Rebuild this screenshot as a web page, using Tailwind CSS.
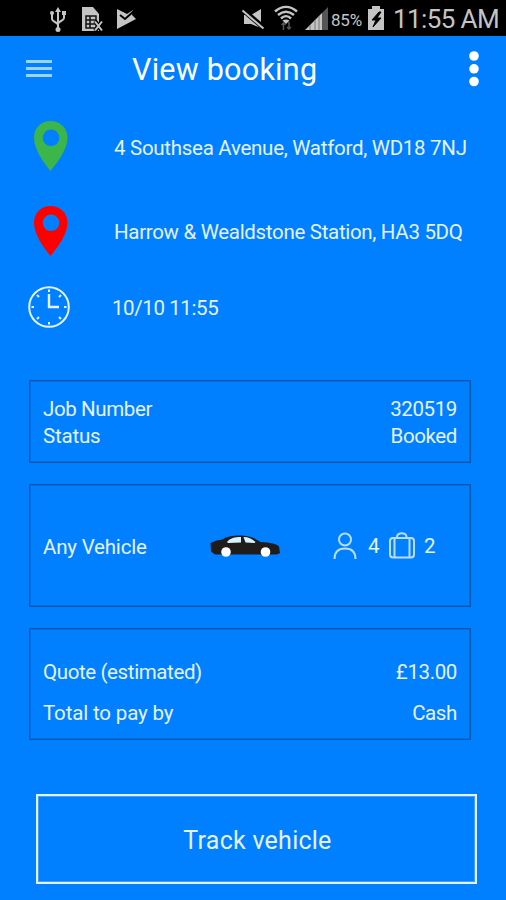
<!DOCTYPE html>
<html lang="en">
<head>
<meta charset="utf-8">
<title>View booking</title>
<script src="https://cdn.jsdelivr.net/npm/@tailwindcss/browser@4"></script>
</head>
<body class="w-[506px] h-[900px] overflow-hidden bg-[#0080ff] font-[Roboto,sans-serif] text-[#e4f2ff] flex flex-col">
  <div class="h-9 shrink-0 bg-black flex items-center text-[#c4c4c4]">
    <svg class="w-[240px] h-9 shrink-0" viewBox="0 0 240 36" fill="none">
      <g stroke="#c4c4c4" stroke-width="2">
        <path d="M58 11v18M52 13v6c0 3 6 3 6 6M64 13v5c0 3-6 3-6 6"/>
      </g>
      <g fill="#c4c4c4"><path d="M58 7l3 5h-6z"/><circle cx="58" cy="29.500" r="2.500"/><circle cx="52" cy="13" r="2"/><path d="M62 11h4v4h-4z"/></g>
      <path d="M82 7h11l6 7v17H82z" fill="#c4c4c4"/>
      <path d="M86 16h10v12H86zM86 20h10M86 24h10M90 16v12" stroke="#111" stroke-width="1.500"/>
      <path d="M95 21l8 10M103 21l-8 10" stroke="#000" stroke-width="4"/>
      <path d="M95 21.500l7 9M102 21.500l-7 9" stroke="#c4c4c4" stroke-width="2"/>
      <path d="M117 9l6 3 4 2 6-4-1 5 4 4-19 10z" fill="#c4c4c4"/>
      <path d="M120 15l5 4 9-8" stroke="#000" stroke-width="2"/>
    </svg>
    <svg class="w-[90px] h-9 shrink-0" viewBox="240 0 90 36" fill="none">
      <path d="M244 15h7l10-6v19l-10-4h-7z" fill="#c4c4c4"/>
      <path d="M242 9l22 19" stroke="#000" stroke-width="5"/><path d="M242.500 10.500l21 18" stroke="#c4c4c4" stroke-width="2"/>
      <path d="M275 11.500c7-6 15-6 22 0M278 15c5-4 11-4 16 0M281 18.500c3-3 7-3 10 0" stroke="#c4c4c4" stroke-width="2.500"/>
      <path d="M282.500 20.500q3.500-2 7 0L286 24z" fill="#c4c4c4"/>
      <path d="M283.500 30v-7M281.500 25l2-2 2 2M289 22v7M287 27l2 2 2-2" stroke="#555" stroke-width="1.500"/>
      <path d="M305 30L322 13v17z" fill="#c4c4c4"/>
      <path d="M322 13l6-6v23h-6z" fill="#555"/>
      <path d="M310 25v5M315 20v10M319 16v14" stroke="#777" stroke-width="1"/>
    </svg>
    <span class="w-[37px] pl-[1px] pt-[4px] text-[17px] leading-5 tracking-[-0.200px]">85%</span>
    <svg class="w-[18px] h-9 shrink-0" viewBox="366 0 18 36"><path d="M367 9h4V6h8v3h4v21h-16z" fill="#c4c4c4"/><path d="M378 12l-7 8h4l-3 7 8-9h-4l4-6z" fill="#000" stroke="#000"/></svg>
    <span class="pl-[8px] pt-[2px] text-[26px] leading-8 tracking-[-0.600px] whitespace-nowrap">11:55 AM</span>
  </div>

  <header class="h-[65px] shrink-0 flex items-center">
    <svg class="ml-[26px] w-[26px] h-5" viewBox="0 0 26 20" stroke="#9fd0ff" stroke-width="3"><path d="M0 2.500h26M0 9.500h26M0 16.500h26"/></svg>
    <h1 class="ml-[80px] w-[330px] text-[30.500px] leading-9 pt-[2px] tracking-[0.250px] text-white whitespace-nowrap">View booking</h1>
    <svg class="w-[24px] h-10" viewBox="462 48 24 40" fill="#fff"><circle cx="474" cy="55" r="4.800"/><circle cx="474" cy="67.800" r="4.800"/><circle cx="474" cy="80.500" r="4.800"/></svg>
  </header>

  <section class="h-[279px] shrink-0 text-[20.500px] tracking-[-0.280px]">
    <div class="h-[90px] flex items-center">
      <svg class="ml-[33px] w-9 h-[52px]" viewBox="0 0 36 52"><path fill="#3cb54a" fill-rule="evenodd" d="M17.500 1C8 1 1 8 1 17.500c0 12 9 24 16.500 33.500C25 41.500 34.500 29.500 34.500 17.500 34.500 8 27 1 17.500 1zM18 9.500a8.300 8.300 0 1 1 0 16.600 8.300 8.300 0 0 1 0-16.600z"/></svg>
      <span class="ml-[45px] pt-[4px] whitespace-nowrap">4 Southsea Avenue, Watford, WD18 7NJ</span>
    </div>
    <div class="h-[79px] flex items-center">
      <svg class="ml-[33px] w-9 h-[52px]" viewBox="0 0 36 52"><path fill="#ff0000" fill-rule="evenodd" d="M17.500 1C8 1 1 8 1 17.500c0 12 9 24 16.500 33.500C25 41.500 34.500 29.500 34.500 17.500 34.500 8 27 1 17.500 1zM18 9.500a8.300 8.300 0 1 1 0 16.600 8.300 8.300 0 0 1 0-16.600z"/></svg>
      <span class="ml-[45px] pt-[3px] tracking-[-0.310px] whitespace-nowrap">Harrow &amp; Wealdstone Station, HA3 5DQ</span>
    </div>
    <div class="h-[74px] flex items-center">
      <svg class="ml-[28px] w-[42px] h-[42px]" viewBox="0 0 42 42" fill="none" stroke="#e4f2ff"><circle cx="21" cy="21" r="19.800" stroke-width="2"/><path d="M21 8v13h10" stroke-width="2.400"/><path d="M21 3.500v2.500M21 36v2.500M3.500 21H6M36 21h2.500M9 9l2 2M31 31l2 2M9 33l2-2M31 11l2-2" stroke-width="2"/></svg>
      <span class="ml-[42px] pt-[2px] tracking-[-0.400px] whitespace-nowrap">10/10 11:55</span>
    </div>
  </section>

  <main class="pl-[29px] pr-[35px] flex flex-col text-[20.500px] tracking-[-0.380px]">
    <div class="h-[83px] border border-[#0055ac] inset-shadow-[0_0_0_1px_#006fde] px-[13px] pt-[13px]">
      <div class="flex justify-between h-[27px] leading-[30px]"><span>Job Number</span><span>320519</span></div>
      <div class="flex justify-between h-[27px] leading-[30px]"><span class="tracking-[-0.200px]">Status</span><span>Booked</span></div>
    </div>
    <div class="mt-[21px] h-[123px] border border-[#0055ac] inset-shadow-[0_0_0_1px_#006fde] pl-[13px] flex items-center">
      <span class="w-[166px] pt-[3px] tracking-[-0.200px]">Any Vehicle</span>
      <svg class="w-[74px] h-[30px]" viewBox="209 530 74 30">
        <path fill="#211c1c" d="M210.500 542l6-2.500 6-1c4-3 9-4 18-4 8 0 13 2 20 6.500 10 .5 16 2 18.500 4.500l1 6.500-3 1.500h-62l-4-3z"/>
        <path fill="#d7f4fb" d="M227 541c3-4 8-5 14-5v5.500l-13 .5zM243.500 536c5 0 8 1.500 12 5l-1 1-9-.5z"/>
        <circle cx="226" cy="551" r="4.800" fill="#fff"/><circle cx="265.500" cy="551" r="4.800" fill="#fff"/>
      </svg>
      <svg class="ml-[50px] w-6 h-[28px]" viewBox="333 531 24 28" fill="none" stroke="#b9dcff" stroke-width="2"><circle cx="345" cy="538.500" r="6"/><path d="M334.500 558c0-7 4-10.500 10.500-10.500S355.500 551 355.500 558"/></svg>
      <span class="ml-[11px] w-[20px] pt-[2px]">4</span>
      <svg class="w-[28px] h-[28px]" viewBox="388 532 28 28" fill="none" stroke="#b9dcff" stroke-width="2"><rect x="390" y="538" width="24" height="19.500" rx="3"/><path d="M394.500 538v19.500M409.500 538v19.500M397 538v-1c0-5 9.500-5 9.500 0v1"/></svg>
      <span class="ml-[8px] pt-[2px]">2</span>
    </div>
    <div class="mt-[21px] h-[112px] border border-[#0055ac] inset-shadow-[0_0_0_1px_#006fde] px-[13px] pt-[22px]">
      <div class="flex justify-between h-[41px] leading-[42px]"><span>Quote (estimated)</span><span>£13.00</span></div>
      <div class="flex justify-between h-[41px] leading-[42px]"><span class="tracking-[-0.150px]">Total to pay by</span><span>Cash</span></div>
    </div>
  </main>

  <button class="mt-[54px] ml-[36px] w-[441px] h-[90px] shrink-0 border-2 border-[#e4f2ff] inset-shadow-[0_0_0_1px_#3f9fff] text-[25px] tracking-[0.250px] pt-[4px] pl-[2px]">Track vehicle</button>
</body>
</html>
